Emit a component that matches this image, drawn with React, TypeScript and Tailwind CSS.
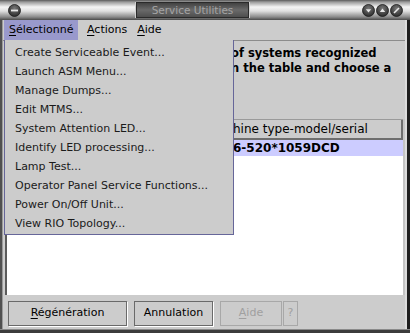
import React from "react";

function CircleBtn({ glyph }: { glyph: "minus" | "down" | "up" | "max" }) {
  return (
    <svg width="13" height="13" viewBox="0 0 13 13">
      <defs>
        <radialGradient id={`g-${glyph}`} cx="50%" cy="35%" r="65%">
          <stop offset="0%" stopColor="#7a7a7a" />
          <stop offset="100%" stopColor="#2a2a2a" />
        </radialGradient>
      </defs>
      <circle cx="6.5" cy="6.5" r="6" fill={`url(#g-${glyph})`} stroke="#1a1a1a" strokeWidth="0.8" />
      {glyph === "minus" && <rect x="3" y="5.6" width="7" height="1.8" fill="#e8e8e8" />}
      {glyph === "down" && <path d="M3.8 5.2 L9.2 5.2 L6.5 8.6 Z" fill="#e8e8e8" />}
      {glyph === "up" && <path d="M3.8 8 L9.2 8 L6.5 4.4 Z" fill="#e8e8e8" />}
      {glyph === "max" && <path d="M4 9 L9 4" stroke="#e8e8e8" strokeWidth="1.6" />}
    </svg>
  );
}

const items = [
  "Create Serviceable Event...",
  "Launch ASM Menu...",
  "Manage Dumps...",
  "Edit MTMS...",
  "System Attention LED...",
  "Identify LED processing...",
  "Lamp Test...",
  "Operator Panel Service Functions...",
  "Power On/Off Unit...",
  "View RIO Topology...",
];

export default function App() {
  return (
    <div className="relative w-[410px] h-[333px] overflow-hidden flex flex-col bg-[#cccccc] font-['DejaVu_Sans',sans-serif] text-black">
      {/* Title bar */}
      <div className="h-[20px] shrink-0 flex items-center bg-[linear-gradient(to_bottom,#5a5a5a_0%,#9a9a9a_10%,#f4f4f4_35%,#e0e0e0_55%,#8a8a8a_85%,#4a4a4a_100%)]">
        <div className="w-[8px]" />
        <CircleBtn glyph="minus" />
        <div className="flex-1 flex justify-center pl-[2px]">
          <div className="h-[16px] px-[1px] flex items-center border-x border-[#d0d0d0] bg-[linear-gradient(to_bottom,#3c3c3c,#6a6a6a_50%,#4a4a4a)] shadow-[inset_0_0_0_1px_#2a2a2a]">
            <span className="px-[15px] text-[10.5px] leading-none text-[#a4a4a4]">Service Utilities</span>
          </div>
        </div>
        <div className="flex gap-[1px] pr-[7px]">
          <CircleBtn glyph="down" />
          <CircleBtn glyph="up" />
          <CircleBtn glyph="max" />
        </div>
      </div>

      {/* Body with frame */}
      <div className="flex-1 flex bg-[#4a4a4a]">
        <div className="w-[2px] bg-[#505050]" />
        <div className="w-[1px] bg-[#9a9a9a]" />
        <div className="flex-1 flex flex-col bg-[#cccccc]">
          {/* Menu bar */}
          <div className="h-[21px] shrink-0 flex items-stretch border-b border-[#8c8c8c] text-[11px] pl-[1px]">
            <div className="w-[74px] bg-[#9999cc] flex items-center pl-[5px]">
              <span><span className="underline underline-offset-2">S</span>électionné</span>
            </div>
            <div className="flex items-center pl-[9px]">
              <span><span className="underline underline-offset-2">A</span>ctions</span>
            </div>
            <div className="flex items-center pl-[10px]">
              <span><span className="underline underline-offset-2">A</span>ide</span>
            </div>
          </div>

          {/* Instruction text (left part hidden under the open menu) */}
          <div className="h-[78px] shrink-0 pt-[5px] text-[11.5px] font-bold leading-[15px] whitespace-nowrap">
            <div className="flex">
              <span className="inline-block w-[228px]" />
              <span>of systems recognized</span>
            </div>
            <div className="flex">
              <span className="inline-block w-[228px]" />
              <span>n the table and choose a</span>
            </div>
          </div>

          {/* Table */}
          <div className="h-[176px] shrink-0 flex ml-[2px]">
            <div className="flex-1 flex flex-col border-l-2 border-[#5a5a5a] bg-white">
              <div className="h-[21px] flex bg-[#cccccc] border-t border-[#9a9a9a]">
                <div className="w-[220px] border-b border-[#777]" />
                <div className="flex-1 flex items-center pl-[6px] text-[12px] border-r-2 border-b-2 border-[#6e6e6e]">hine type-model/serial</div>
              </div>
              <div className="h-[16px] flex bg-[#ccccff] text-[12px] font-bold leading-[16px]">
                <div className="w-[220px]" />
                <div className="flex-1 pl-[6px]">6-520*1059DCD</div>
              </div>
              <div className="flex-1 bg-white" />
            </div>
            <div className="w-[2px] bg-[#c4c4c4]" />
          </div>

          {/* Buttons */}
          <div className="flex-1 flex items-start pt-[6px] pl-[5px] gap-[7px] text-[11px]">
            <div className="w-[119px] h-[25px] flex items-center justify-center border border-[#6a6a6a] shadow-[1px_1px_0_#ffffff]">
              <span><span className="underline underline-offset-2">R</span>égénération</span>
            </div>
            <div className="w-[79px] h-[25px] flex items-center justify-center border border-[#6a6a6a] shadow-[1px_1px_0_#ffffff]">
              Annulation
            </div>
            <div className="flex gap-[1px]">
              <div className="w-[62px] h-[25px] flex items-center justify-center border border-[#a8a8a8] text-[#a0a0a0]">
                <span><span className="underline underline-offset-2">A</span>ide</span>
              </div>
              <div className="w-[15px] h-[25px] flex items-center justify-center border border-[#a8a8a8] text-[#a0a0a0]">?</div>
            </div>
          </div>
        </div>
        <div className="w-[2px] bg-[#dcdcdc]" />
        <div className="w-[3px] bg-[#1e1e1e]" />
      </div>
      <div className="h-[4px] shrink-0 bg-[#3c3c3c] border-t border-[#8a8a8a]" />

      {/* Dropdown menu overlay */}
      <div className="absolute left-[4px] top-[40px] w-[230px] h-[195px] bg-[#cccccc] border border-[#666699] border-t-0 pt-[4px] text-[11px] text-[#1a1a1a]">
        {items.map((it) => (
          <div key={it} className="h-[19px] flex items-center pl-[10px] whitespace-nowrap">
            {it}
          </div>
        ))}
      </div>
    </div>
  );
}
